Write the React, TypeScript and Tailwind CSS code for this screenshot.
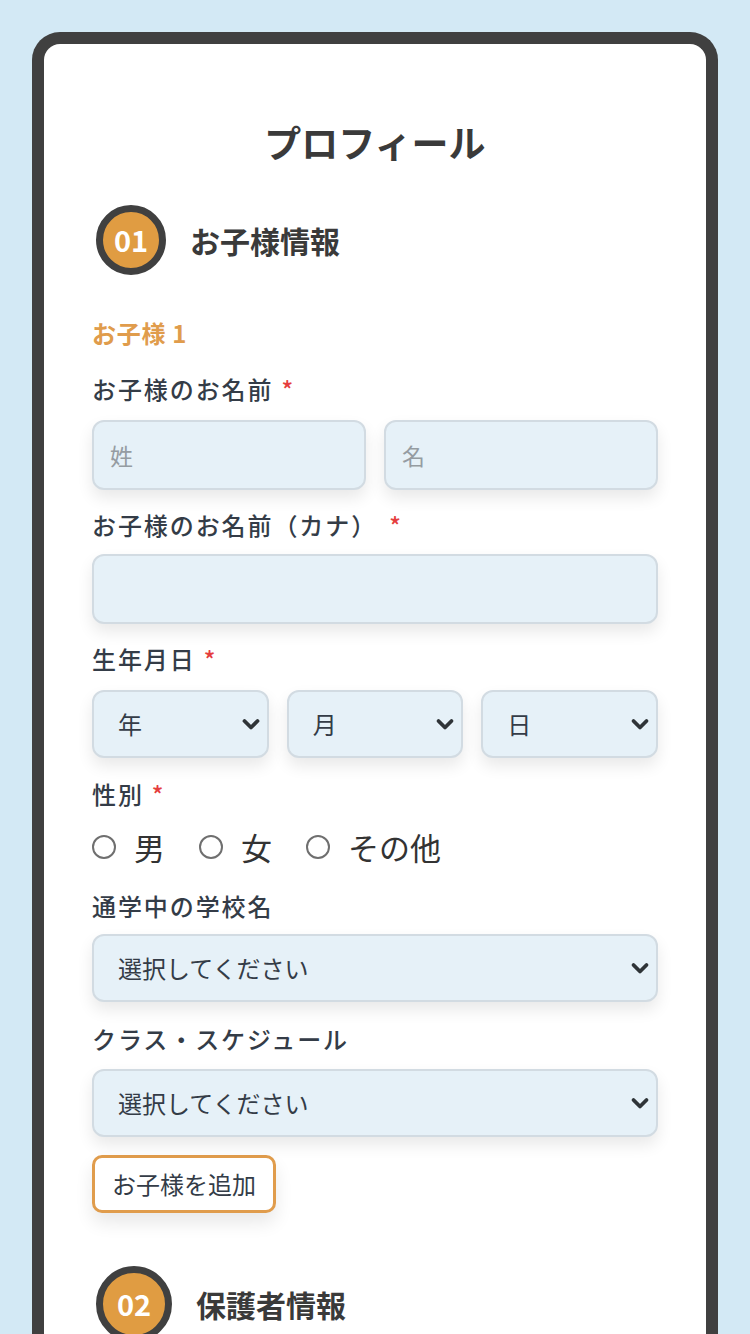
import type { ReactNode } from "react";

const font = {
  fontFamily: '"Noto Sans CJK JP", "Noto Sans", sans-serif',
};

function Chevron() {
  return (
    <svg
      width="20"
      height="13"
      viewBox="0 0 20 13"
      className="pointer-events-none absolute right-[6px] top-1/2 -translate-y-1/2"
    >
      <path
        d="M3.5 3.5 L10 10 L16.5 3.5"
        fill="none"
        stroke="#2f3438"
        strokeWidth="3.8"
        strokeLinecap="round"
        strokeLinejoin="round"
      />
    </svg>
  );
}

function StepHeader({ num, title, size }: { num: string; title: string; size: number }) {
  return (
    <div className="flex items-center gap-6 pl-1">
      <div
        className="flex shrink-0 items-center justify-center rounded-full border-[7px] border-[#404040] bg-[#e09c42] text-[29px] font-bold text-white"
        style={{ width: size, height: size }}
      >
        {num}
      </div>
      <h2 className="text-[30px] font-bold text-[#3a3a3a]">{title}</h2>
    </div>
  );
}

function Label({ children, required }: { children: ReactNode; required?: boolean }) {
  return (
    <div className="h-8 text-[24px] font-medium leading-8 tracking-[0.08em] text-[#343c47]">
      {children}
      {required && <span className="ml-2 text-[#e53e3e]">*</span>}
    </div>
  );
}

const boxCls =
  "h-[70px] w-full rounded-xl border-2 border-[#d2dbe2] bg-[#e6f1f8] px-4 text-[23px] shadow-[0_8px_16px_rgba(0,0,0,0.09)]";

function Select({ text, height = 68 }: { text: string; height?: number }) {
  return (
    <div
      className="relative flex w-full items-center rounded-xl border-2 border-[#d2dbe2] bg-[#e6f1f8] pl-6 text-[24px] text-[#343c47] shadow-[0_8px_16px_rgba(0,0,0,0.09)]"
      style={{ height }}
    >
      {text}
      <Chevron />
    </div>
  );
}

function Radio({ label }: { label: string }) {
  return (
    <label className="flex items-center gap-[18px]">
      <span className="size-6 rounded-full border-2 border-[#6f6f6f] bg-white" />
      <span className="text-[31px] leading-10 text-[#333]">{label}</span>
    </label>
  );
}

export default function App() {
  return (
    <div className="h-[1334px] overflow-hidden bg-[#d3e9f5] px-8 pt-8" style={font}>
      <div className="min-h-[1400px] rounded-t-[28px] border-[12px] border-b-0 border-[#404040] bg-white px-12 pt-[74px]">
        <h1 className="text-center text-[37px] font-bold leading-[48px] text-[#3a3a3a]">
          プロフィール
        </h1>

        <div className="mt-[39px]">
          <StepHeader num="01" title="お子様情報" size={70} />
        </div>

        <div className="mt-[42px] h-8 text-[24px] font-bold leading-8 tracking-[0.03em] text-[#e09c4c]">
          お子様 1
        </div>

        <div className="mt-6">
          <Label required>お子様のお名前</Label>
          <div className="mt-[15px] grid grid-cols-2 gap-[18px]">
            <div className={`${boxCls} flex items-center text-[#959ca2]`}>姓</div>
            <div className={`${boxCls} flex items-center text-[#959ca2]`}>名</div>
          </div>
        </div>

        <div className="mt-[19px]">
          <Label>
            お子様のお名前（カナ）
            <span className="ml-3 text-[#e53e3e]">*</span>
          </Label>
          <div className={`mt-[13px] ${boxCls}`} />
        </div>

        <div className="mt-[19px]">
          <Label required>生年月日</Label>
          <div className="mt-[15px] grid grid-cols-3 gap-[18px]">
            <Select text="年" />
            <Select text="月" />
            <Select text="日" />
          </div>
        </div>

        <div className="mt-5">
          <Label required>性別</Label>
          <div className="mt-[17px] flex items-center gap-[34px]">
            <Radio label="男" />
            <Radio label="女" />
            <Radio label="その他" />
          </div>
        </div>

        <div className="mt-[23px]">
          <Label>通学中の学校名</Label>
          <div className="mt-3">
            <Select text="選択してください" height={68} />
          </div>
        </div>

        <div className="mt-[21px]">
          <Label>クラス・スケジュール</Label>
          <div className="mt-[14px]">
            <Select text="選択してください" height={68} />
          </div>
        </div>

        <button className="mt-[18px] flex h-[58px] items-center rounded-[10px] border-[3px] border-[#e09c4c] bg-white px-[17px] text-[24px] text-[#343c47] shadow-[0_10px_18px_rgba(0,0,0,0.09)]">
          お子様を追加
        </button>

        <div className="mt-[53px]">
          <StepHeader num="02" title="保護者情報" size={76} />
        </div>
      </div>
    </div>
  );
}
